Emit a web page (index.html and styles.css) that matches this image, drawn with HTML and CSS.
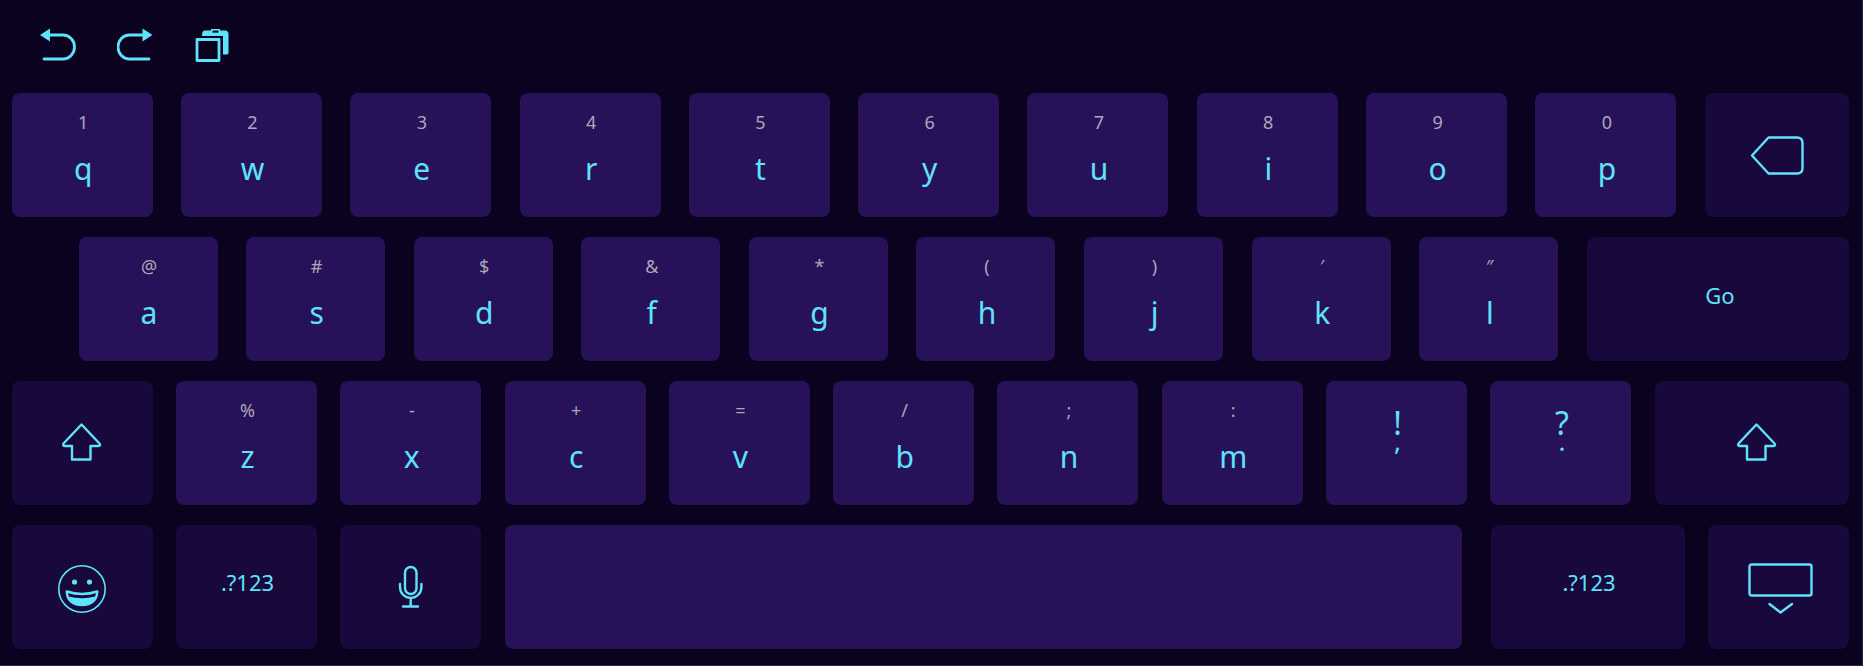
FILE: index.html
```html
<!DOCTYPE html>
<html lang="en">

<head>
    <meta charset="UTF-8">
    <title>Touch keyboard</title>
    <link rel="stylesheet" href="styles.css">
</head>

<body>
    <div class="keyboard">
        <div class="toolbar">
            <svg class="tool-icon undo" width="36" height="34" viewBox="0 0 36 34">
                <path class="solid" d="M0 7 10 .5V13.5Z" />
                <path class="line" d="M10 7H23A11.5 12 0 0 1 23 31H4" />
            </svg>
            <svg class="tool-icon redo" width="36" height="34" viewBox="0 0 36 34">
                <path class="solid" d="M35.5 7 25.5 .5V13.5Z" />
                <path class="line" d="M25.5 7H12.5A11.5 12 0 0 0 12.5 31H32" />
            </svg>
            <svg class="tool-icon paste" width="34" height="34" viewBox="0 0 34 34">
                <path class="solid" d="M7 8C7 4 8 2.5 10 2.5H16V1H25V2.5H30Q33.5 2.5 33.5 6V25Q33.5 26.5 31 26.5H28V8Z" />
                <rect class="hole" x="17.5" y="2.6" width="6" height="2" />
                <rect class="line" x="2" y="11.5" width="22" height="21" />
            </svg>
        </div>

        <div class="row row-top">
            <div class="key"><span class="sub">1</span><span class="main">q</span></div>
            <div class="key"><span class="sub">2</span><span class="main">w</span></div>
            <div class="key"><span class="sub">3</span><span class="main">e</span></div>
            <div class="key"><span class="sub">4</span><span class="main">r</span></div>
            <div class="key"><span class="sub">5</span><span class="main">t</span></div>
            <div class="key"><span class="sub">6</span><span class="main">y</span></div>
            <div class="key"><span class="sub">7</span><span class="main">u</span></div>
            <div class="key"><span class="sub">8</span><span class="main">i</span></div>
            <div class="key"><span class="sub">9</span><span class="main">o</span></div>
            <div class="key"><span class="sub">0</span><span class="main">p</span></div>
            <div class="key key-fn key-wide">
                <svg width="54" height="40" viewBox="0 0 54 40">
                    <path class="line" d="M2 20.5 18.5 2.5H47Q52.5 2.5 52.5 8V33Q52.5 38.5 47 38.5H18.5Z" />
                </svg>
            </div>
        </div>

        <div class="row row-home">
            <div class="key"><span class="sub">@</span><span class="main">a</span></div>
            <div class="key"><span class="sub">#</span><span class="main">s</span></div>
            <div class="key"><span class="sub">$</span><span class="main">d</span></div>
            <div class="key"><span class="sub">&amp;</span><span class="main">f</span></div>
            <div class="key"><span class="sub">*</span><span class="main">g</span></div>
            <div class="key"><span class="sub">(</span><span class="main">h</span></div>
            <div class="key"><span class="sub">)</span><span class="main">j</span></div>
            <div class="key"><span class="sub">′</span><span class="main">k</span></div>
            <div class="key"><span class="sub">″</span><span class="main">l</span></div>
            <div class="key key-fn key-wide key-text key-go">Go</div>
        </div>

        <div class="row row-shift">
            <div class="key key-fn">
                <svg class="shift-icon shift-left" width="40" height="38" viewBox="0 0 40 38">
                    <path class="line" d="M19.5 1.5 37.5 20.5Q39 23 36 23H28.5V36.5H10V23H3Q.5 23 1.5 20.5Z" />
                </svg>
            </div>
            <div class="key"><span class="sub">%</span><span class="main">z</span></div>
            <div class="key"><span class="sub">-</span><span class="main">x</span></div>
            <div class="key"><span class="sub">+</span><span class="main">c</span></div>
            <div class="key"><span class="sub">=</span><span class="main">v</span></div>
            <div class="key"><span class="sub">/</span><span class="main">b</span></div>
            <div class="key"><span class="sub">;</span><span class="main">n</span></div>
            <div class="key"><span class="sub">:</span><span class="main">m</span></div>
            <div class="key key-punct"><span>!</span><span>,</span></div>
            <div class="key key-punct"><span>?</span><span>.</span></div>
            <div class="key key-fn key-wide">
                <svg class="shift-icon shift-right" width="40" height="38" viewBox="0 0 40 38">
                    <path class="line" d="M19.5 1.5 37.5 20.5Q39 23 36 23H28.5V36.5H10V23H3Q.5 23 1.5 20.5Z" />
                </svg>
            </div>
        </div>

        <div class="row row-bottom">
            <div class="key key-fn">
                <svg class="low-icon emoji-icon" width="50" height="50" viewBox="0 0 50 50">
                    <circle class="thin" cx="25" cy="25" r="23.2" />
                    <circle class="solid" cx="17.5" cy="18" r="2.6" />
                    <circle class="solid" cx="32.5" cy="18" r="2.6" />
                    <path class="line" d="M9.7 27.5Q25 32.5 40.3 27.5Q39.5 41 25 41Q10.5 41 9.7 27.5Z" />
                    <path class="solid" d="M11.5 32.5Q25 36 38.5 32.5Q35 41 25 41Q15 41 11.5 32.5Z" />
                </svg>
            </div>
            <div class="key key-fn key-text">.?123</div>
            <div class="key key-fn">
                <svg width="28" height="44" viewBox="0 0 28 44">
                    <rect class="line" x="8" y="2" width="11.5" height="27" rx="5.75" />
                    <path class="line" d="M3 19V22A10.7 11 0 0 0 24.4 22V19M13.7 33V41M6 41.5H21" />
                </svg>
            </div>
            <div class="key key-space"></div>
            <div class="key key-fn key-text key-sym">.?123</div>
            <div class="key key-fn">
                <svg class="low-icon hide-icon" width="67" height="54" viewBox="0 0 67 54">
                    <rect class="line" x="2.5" y="2.5" width="62" height="31" rx="2" />
                    <path class="line" d="M22.5 42 33.5 50.5 45 42" />
                </svg>
            </div>
        </div>
    </div>
</body>

</html>
```

FILE: styles.css
```css
body {
    margin: 0;
    background-color: #0a021e;
    font-family: "Noto Sans", "Open Sans", sans-serif;
}

.keyboard {
    box-sizing: border-box;
    width: 1863px;
    height: 666px;
    padding-right: 14px;
    display: flex;
    flex-direction: column;
    gap: 20px;
    box-shadow: inset -1px -1px 0 #2a2740;
    overflow: hidden;
}

.toolbar {
    height: 73px;
    padding-left: 40px;
    display: flex;
    align-items: flex-start;
}

.tool-icon {
    margin-top: 28px;
}

.tool-icon .line {
    stroke-width: 2.8;
}

.redo {
    margin-left: 41px;
}

.paste {
    margin-left: 42px;
}

.row {
    display: flex;
    height: 124px;
}

.row-top {
    padding-left: 11.7px;
    gap: 28.3px;
}

.row-home {
    padding-left: 78.5px;
    gap: 28.6px;
}

.row-shift,
.row-bottom {
    padding-left: 11.7px;
    gap: 23.3px;
}

.key {
    box-sizing: border-box;
    flex: 0 0 141px;
    padding-left: 2px;
    display: flex;
    flex-direction: column;
    align-items: center;
    justify-content: flex-start;
    background-color: #27125a;
    border-radius: 8px;
    box-shadow: 0 1px 1px rgba(0, 0, 0, 0.35);
    color: #5fe3fa;
}

.row-home .key {
    flex-basis: 139px;
}

.key-fn {
    padding-left: 0;
    justify-content: center;
    background-color: #18083c;
}

.row .key-wide {
    flex: 1 1 0;
}

.key .sub {
    margin-top: 16.5px;
    line-height: 24px;
    font-size: 18px;
    color: #b0a5b8;
}

.key .main {
    margin-top: 13.5px;
    line-height: 44px;
    font-size: 30px;
}

.key-text {
    padding-left: 2px;
    padding-bottom: 10px;
    font-size: 22px;
}

.key-go {
    padding-left: 4px;
    padding-bottom: 9px;
}

.key-punct {
    padding-top: 30px;
    font-size: 32px;
    line-height: 24px;
}

.key-punct span:last-child {
    margin-top: -2px;
    font-size: 26px;
    line-height: 16px;
}

.key-space {
    flex: 0 0 957px;
    margin-right: 6px;
}

.key-sym {
    flex: 0 0 194.3px;
    padding-left: 2px;
}

.key svg {
    display: block;
}

.shift-icon {
    margin-bottom: 2px;
}

.shift-left {
    margin-right: 1px;
}

.shift-right {
    margin-left: 10px;
}

.low-icon {
    margin-top: 4px;
}

.emoji-icon {
    margin-right: 1px;
}

.hide-icon {
    margin-left: 3px;
}

.line {
    fill: none;
    stroke: #5fe3fa;
    stroke-width: 2.4;
    stroke-linejoin: round;
    stroke-linecap: round;
}

.thin {
    fill: none;
    stroke: #5fe3fa;
    stroke-width: 1.6;
}

.solid {
    fill: #5fe3fa;
}

.hole {
    fill: #0a021e;
}
```
